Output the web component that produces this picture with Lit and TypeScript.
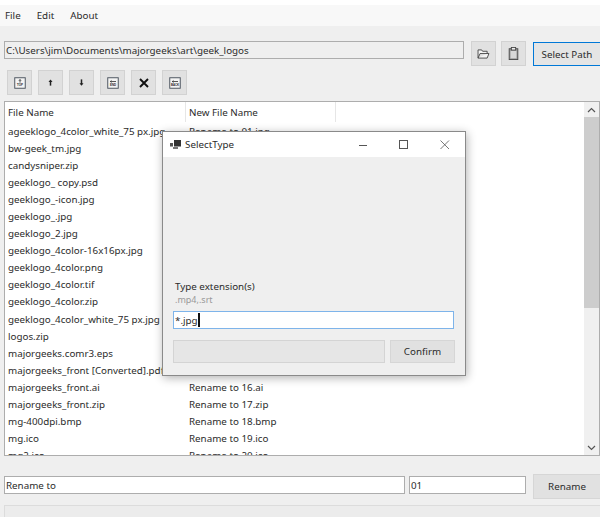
import { LitElement, html, css, svg } from "lit";
import { customElement } from "lit/decorators.js";

const FILES = [
  "ageeklogo_4color_white_75 px.jpg", "bw-geek_tm.jpg", "candysniper.zip", "geeklogo_ copy.psd",
  "geeklogo_-icon.jpg", "geeklogo_.jpg", "geeklogo_2.jpg", "geeklogo_4color-16x16px.jpg",
  "geeklogo_4color.png", "geeklogo_4color.tif", "geeklogo_4color.zip", "geeklogo_4color_white_75 px.jpg",
  "logos.zip", "majorgeeks.comr3.eps", "majorgeeks_front [Converted].pdf", "majorgeeks_front.ai",
  "majorgeeks_front.zip", "mg-400dpi.bmp", "mg.ico", "mg2.ico",
];

const docIcon = (label: string, arrow: "up" | "left") => html`<svg width="12" height="12" viewBox="0 0 16 16">
  <rect x="1" y="1" width="14" height="14" fill="#f4f4f4" stroke="#4d5560" stroke-width="1.3"></rect>
  ${arrow === "up"
    ? svg`<path d="M8 3.5v4M6.6 5L8 3.4 9.4 5" fill="none" stroke="#222" stroke-width="1"></path>`
    : svg`<path d="M12 6H4.5M6 4.6L4.4 6 6 7.4" fill="none" stroke="#222" stroke-width="1"></path>`}
  <text x="8" y="12.4" text-anchor="middle" font-size="3.8" font-weight="700" fill="#222" font-family="Liberation Sans, sans-serif">${label}</text>
</svg>`;

@customElement("app-root")
export class AppRoot extends LitElement {
  static styles = css`
    :host { display: block; width: 600px; height: 517px; overflow: hidden; position: relative; background: #efefef;
      font-family: "Noto Sans", sans-serif; font-size: 9.8px; color: #2b2b2b; }
    .top { height: 5px; background: #fff; }
    .menu { height: 21px; background: #f8f8f8; display: flex; align-items: center; gap: 16px; padding-left: 5px; padding-bottom: 1px; box-sizing: border-box; }
    .path-row { display: flex; align-items: flex-start; height: 29px; margin-top: 15px; padding-left: 4px; }
    .field { box-sizing: border-box; border: 1px solid #adadad; display: flex; align-items: center; padding-left: 1px; white-space: nowrap; overflow: hidden; }
    .path { width: 460px; height: 18px; flex: none; background: #efefef; }
    .btn { box-sizing: border-box; width: 25px; height: 25px; background: #e1e1e1; border: 1px solid #d2d2d2; display: flex; align-items: center; justify-content: center; flex: none; }
    .open { margin-left: 7px; }
    .clip { margin-left: 5px; }
    .select { box-sizing: border-box; margin-left: 7px; margin-top: 1px; width: 68px; height: 24px; flex: none; background: #e5e5e5; border: 1px solid #0078d7; display: flex; align-items: center; justify-content: center; white-space: nowrap; }
    .tools { display: flex; gap: 6px; padding-left: 7px; height: 31px; }
    .table { box-sizing: border-box; margin-left: 4px; width: 596px; height: 355px; background: #fff; border: 1px solid #adadad; display: flex; overflow: hidden; }
    .list { flex: 1; min-width: 0; overflow: hidden; }
    .head, .row { display: grid; grid-template-columns: 181px 150px; white-space: nowrap; }
    .head { height: 21px; align-items: start; }
    .head span { padding-left: 3px; height: 20px; line-height: 21px; border-right: 1px solid #e6e6e6; }
    .row { height: 17.05px; line-height: 17px; }
    .row span { padding-left: 3px; overflow: hidden; }
    .scroll { width: 15px; flex: none; background: #f0f0f0; display: flex; flex-direction: column; }
    .arrow { height: 15px; display: flex; align-items: center; justify-content: center; flex: none; }
    .thumb { height: 191px; background: #cdcdcd; flex: none; }
    .fill { flex: 1; }
    .bottom { display: flex; align-items: flex-start; padding-left: 4px; margin-top: 18px; height: 31px; }
    .input { height: 18px; background: #fff; margin-top: 2px; flex: none; }
    .b1 { width: 401px; }
    .b2 { width: 117px; margin-left: 4px; }
    .rename { box-sizing: border-box; width: 68px; height: 25px; margin-left: 7px; flex: none; background: #e1e1e1; border: 1px solid #d6d6d6; display: flex; align-items: center; justify-content: center; }
    .status { height: 12px; margin-left: 4px; background: #ececec; border-top: 1px solid #dcdcdc; border-left: 1px solid #dcdcdc; box-sizing: border-box; }
    .dialog { position: absolute; left: 162px; top: 131px; width: 304px; height: 245px; box-sizing: border-box; background: #efefef; border: 1px solid #8a8a8a;
      box-shadow: 1px 2px 9px rgba(0,0,0,.3); display: flex; flex-direction: column; }
    .title { height: 25px; background: #fff; display: flex; align-items: center; flex: none; padding-left: 7px; }
    .title-text { margin-left: 4px; flex: 1; }
    .wc { width: 40.6px; height: 25px; display: flex; align-items: center; justify-content: center; flex: none; }
    .dbody { flex: 1; display: flex; flex-direction: column; padding: 0 10px; }
    .lbl { margin-top: 122px; padding-left: 2px; line-height: 15px; }
    .hint { padding-left: 2px; font-size: 9px; color: #9a9a9a; line-height: 12px; }
    .typed { height: 18px; margin-right: 1px; background: #fff; border: 1px solid #7eb4ea; margin-top: 5px; padding-left: 1px; }
    .caret { display: inline-block; width: 2px; height: 14px; background: #111; }
    .actions { display: flex; gap: 5px; margin-top: 11px; }
    .bar { flex: 1; height: 23px; background: #e6e6e6; border: 1px solid #d4d4d4; box-sizing: border-box; }
    .confirm { box-sizing: border-box; width: 65px; height: 23px; background: #e1e1e1; border: 1px solid #d6d6d6; display: flex; align-items: center; justify-content: center; }
  `;

  render() {
    const ext = (f: string) => f.slice(f.lastIndexOf("."));
    return html`
      <div class="top"></div>
      <div class="menu"><span>File</span><span>Edit</span><span>About</span></div>
      <div class="path-row">
        <div class="field path">C:\\Users\\jim\\Documents\\majorgeeks\\art\\geek_logos</div>
        <div class="btn open"><svg width="13" height="10" viewBox="0 0 14 11"><path d="M1 10V1h4l1 1.5h5v2.5M1 10h10l2-5H3.2z" fill="#f4f4f4" stroke="#444" stroke-width="1"></path></svg></div>
        <div class="btn clip"><svg width="11" height="13" viewBox="0 0 12 15"><rect x="1" y="2" width="10" height="12.5" fill="#9c9c9c" stroke="#444"></rect><rect x="2.6" y="4.5" width="6.8" height="8.5" fill="#d8d8d8"></rect><rect x="3.5" y=".5" width="5" height="3" fill="#eee" stroke="#444"></rect></svg></div>
        <div class="select">Select Path</div>
      </div>
      <div class="tools">
        <div class="btn">${docIcon("TOP", "up")}</div>
        <div class="btn"><svg width="5" height="9" viewBox="0 0 8 12"><path d="M4 11V3" stroke="#222" stroke-width="2.4"></path><path d="M.8 5L4 1l3.2 4z" fill="#222"></path></svg></div>
        <div class="btn"><svg width="5" height="9" viewBox="0 0 8 12"><path d="M4 1v8" stroke="#222" stroke-width="2.4"></path><path d="M.8 7L4 11l3.2-4z" fill="#222"></path></svg></div>
        <div class="btn">${docIcon("END", "left")}</div>
        <div class="btn"><svg width="10" height="10" viewBox="0 0 10 10"><path d="M1 1l8 8M9 1l-8 8" stroke="#111" stroke-width="1.9"></path></svg></div>
        <div class="btn">${docIcon("BACK", "left")}</div>
      </div>
      <div class="table">
        <div class="list">
          <div class="head"><span>File Name</span><span>New File Name</span></div>
          ${FILES.map((f, i) => html`<div class="row"><span>${f}</span><span>Rename to ${String(i + 1).padStart(2, "0")}${ext(f)}</span></div>`)}
        </div>
        <div class="scroll">
          <div class="arrow"><svg width="9" height="6" viewBox="0 0 9 6"><path d="M1 5l3.5-3.5L8 5" fill="none" stroke="#555" stroke-width="1.2"></path></svg></div>
          <div class="thumb"></div>
          <div class="fill"></div>
          <div class="arrow"><svg width="9" height="6" viewBox="0 0 9 6"><path d="M1 1l3.5 3.5L8 1" fill="none" stroke="#555" stroke-width="1.2"></path></svg></div>
        </div>
      </div>
      <div class="bottom">
        <div class="field input b1">Rename to</div>
        <div class="field input b2">01</div>
        <div class="rename">Rename</div>
      </div>
      <div class="status"></div>
      <div class="dialog">
        <div class="title">
          <svg width="11" height="9" viewBox="0 0 11 9"><rect x="4" y="0" width="7" height="6.5" fill="#333"></rect><rect x="0" y="3" width="3" height="3.5" fill="#555"></rect><rect x="3" y="7" width="5" height="2" fill="#777"></rect></svg>
          <span class="title-text">SelectType</span>
          <div class="wc"><svg width="10" height="10" viewBox="0 0 10 10"><path d="M0 5.5h8" stroke="#555"></path></svg></div>
          <div class="wc"><svg width="10" height="10" viewBox="0 0 10 10"><rect x=".5" y=".5" width="8" height="8" fill="none" stroke="#555"></rect></svg></div>
          <div class="wc"><svg width="10" height="10" viewBox="0 0 10 10"><path d="M.5.5l8.5 8.5M9 .5L.5 9" stroke="#555" stroke-width=".8"></path></svg></div>
        </div>
        <div class="dbody">
          <div class="lbl">Type extension(s)</div>
          <div class="hint">.mp4,.srt</div>
          <div class="field typed">*.jpg<span class="caret"></span></div>
          <div class="actions"><div class="bar"></div><div class="confirm">Confirm</div></div>
        </div>
      </div>
    `;
  }
}
